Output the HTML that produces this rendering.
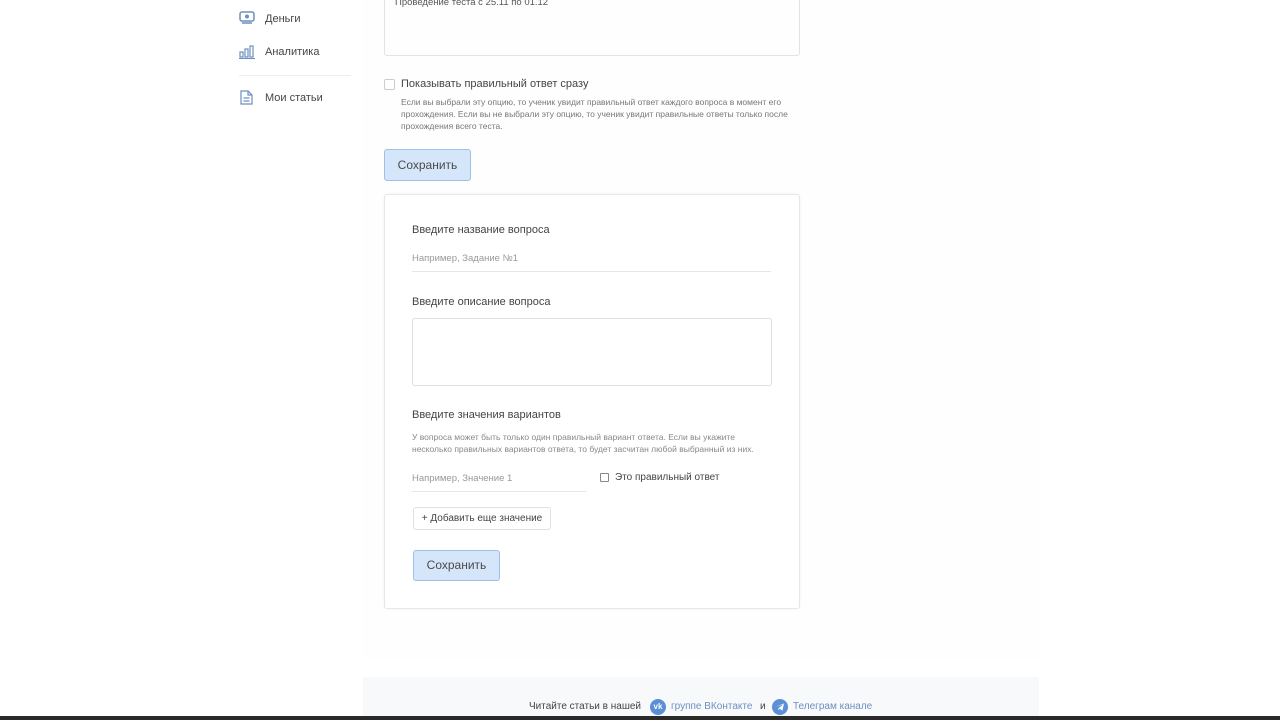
<!DOCTYPE html>
<html><head><meta charset="utf-8"><style>
*{margin:0;padding:0;box-sizing:border-box}
body{width:1280px;height:720px;background:#fff;font-family:"Liberation Sans","DejaVu Sans",sans-serif;position:relative;overflow:hidden;color:#333}
.a{position:absolute}
.btn{background:#d6e6fa;border:1px solid #9fc0e8;border-radius:3px;color:#4a4a4a;font-size:12px;text-align:center}
</style></head><body>
<div class="a" style="left:363px;top:0;width:676px;height:660px;background:#fefefe"></div>
<div class="a" style="left:363px;top:677px;width:676px;height:40px;background:#f8f9fb"></div>
<div class="a" style="left:0;top:716px;width:1280px;height:4px;background:#2a2a2a"></div>

<svg class="a" style="left:239px;top:11px" width="16" height="14" viewBox="0 0 16 14"><rect x="1" y="1" width="14" height="9" rx="2" fill="none" stroke="#6d8fc0" stroke-width="1.5"/><circle cx="8" cy="5.5" r="2" fill="#6d8fc0"/><path d="M3 12h10" stroke="#6d8fc0" stroke-width="1.5"/></svg>
<div class="a" style="left:265px;top:13px;font-size:11px;color:#444">Деньги</div>
<svg class="a" style="left:239px;top:44px" width="16" height="15" viewBox="0 0 16 15"><g fill="none" stroke="#6d8fc0" stroke-width="1.2"><rect x="1" y="8" width="3" height="5"/><rect x="6" y="5" width="3" height="8"/><rect x="11" y="2" width="3" height="11"/></g><path d="M0 14.5h16" stroke="#6d8fc0"/></svg>
<div class="a" style="left:265px;top:46px;font-size:11px;color:#444">Аналитика</div>
<div class="a" style="left:239px;top:75px;width:112px;height:1px;background:#eee"></div>
<svg class="a" style="left:240px;top:90px" width="13" height="15" viewBox="0 0 13 15"><path d="M1 1h7l4 4v9H1z M8 1v4h4 M3.5 8h6 M3.5 11h6" fill="none" stroke="#6d8fc0" stroke-width="1.2"/></svg>
<div class="a" style="left:265px;top:92px;font-size:11px;color:#444">Мои статьи</div>

<div class="a" style="left:384px;top:-5px;width:416px;height:61px;border:1px solid #e3e3e3;border-radius:3px"></div>
<div class="a" style="left:395px;top:-3px;font-size:9.5px;color:#555">Проведение теста с 25.11 по 01.12</div>

<div class="a" style="left:384px;top:79px;width:11px;height:11px;border:1px solid #ccc;border-radius:2px"></div>
<div class="a" style="left:401px;top:78px;font-size:11px;color:#444">Показывать правильный ответ сразу</div>
<div class="a" style="left:401px;top:96px;width:396px;font-size:8.5px;line-height:12px;color:#777">Если вы выбрали эту опцию, то ученик увидит правильный ответ каждого вопроса в момент его прохождения. Если вы не выбрали эту опцию, то ученик увидит правильные ответы только после прохождения всего теста.</div>
<div class="a btn" style="left:384px;top:149px;width:87px;height:32px;line-height:30px">Сохранить</div>

<div class="a" style="left:384px;top:194px;width:416px;height:415px;border:1px solid #e6e6e6;border-radius:3px;background:#fff;box-shadow:0 0 3px rgba(0,0,0,.04)"></div>
<div class="a" style="left:412px;top:224px;font-size:11px;color:#444">Введите название вопроса</div>
<div class="a" style="left:412px;top:253px;font-size:9.5px;color:#999">Например, Задание №1</div>
<div class="a" style="left:412px;top:271px;width:359px;height:1px;background:#e6e6e6"></div>
<div class="a" style="left:412px;top:296px;font-size:11px;color:#444">Введите описание вопроса</div>
<div class="a" style="left:412px;top:318px;width:360px;height:68px;border:1px solid #e0e0e0;border-radius:3px"></div>
<div class="a" style="left:412px;top:409px;font-size:11px;color:#444">Введите значения вариантов</div>
<div class="a" style="left:412px;top:431px;width:360px;font-size:8.5px;line-height:12px;color:#888">У вопроса может быть только один правильный вариант ответа. Если вы укажите несколько правильных вариантов ответа, то будет засчитан любой выбранный из них.</div>
<div class="a" style="left:412px;top:473px;font-size:9.5px;color:#999">Например, Значение 1</div>
<div class="a" style="left:412px;top:491px;width:174px;height:1px;background:#e6e6e6"></div>
<div class="a" style="left:600px;top:473px;width:9px;height:9px;border:1px solid #888;border-radius:1px"></div>
<div class="a" style="left:615px;top:472px;font-size:10px;color:#444">Это правильный ответ</div>
<div class="a" style="left:413px;top:507px;width:138px;height:23px;border:1px solid #e0e0e0;border-radius:3px;font-size:10px;line-height:21px;text-align:center;color:#444">+ Добавить еще значение</div>
<div class="a btn" style="left:413px;top:550px;width:87px;height:31px;line-height:29px">Сохранить</div>

<div class="a" style="left:529px;top:701px;font-size:10px;color:#444">Читайте статьи в нашей</div>
<div class="a" style="left:650px;top:699px;width:16px;height:16px;border-radius:50%;background:#5b8fd6;color:#fff;font-size:8px;font-weight:bold;text-align:center;line-height:16px">vk</div>
<div class="a" style="left:671px;top:701px;font-size:10px;color:#6d8fc0">группе ВКонтакте</div>
<div class="a" style="left:760px;top:701px;font-size:10px;color:#444">и</div>
<svg class="a" style="left:772px;top:699px" width="16" height="16" viewBox="0 0 16 16"><circle cx="8" cy="8" r="8" fill="#5b8fd6"/><path d="M3.5 7.8l8.5-3.3-1.6 7.2-2.6-2-1.4 1.4V9.4L11 5.6" fill="#fff"/></svg>
<div class="a" style="left:793px;top:701px;font-size:10px;color:#6d8fc0">Телеграм канале</div>
</body></html>
